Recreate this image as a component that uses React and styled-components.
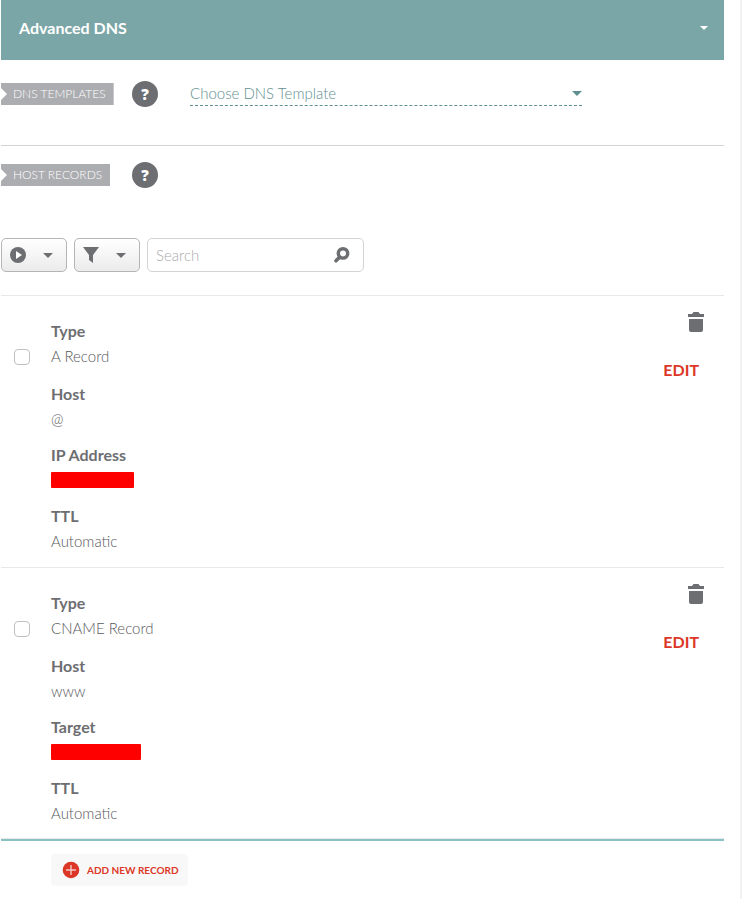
import React, { useId } from "react";
import styled, { createGlobalStyle } from "styled-components";

const colors = {
  teal: "#7ba6a7",
  tealText: "#5f8f90",
  accent: "#8bc1c1",
  gray: "#6d6e71",
  tag: "#acadb1",
  red: "#dc3726",
  line: "#e8e8e8",
};

const GlobalStyle = createGlobalStyle`
  *, *::before, *::after { box-sizing: border-box; }
  body {
    margin: 0;
    background: #fff;
    color: ${colors.gray};
    font-family: Lato, "Open Sans", sans-serif;
    font-size: 15px;
    font-weight: 300;
    line-height: 24px;
  }
  button, input, select { font: inherit; color: inherit; }
  svg { display: block; flex: none; }
`;

const Page = styled.main`
  min-height: 100vh;
  padding: 0 16px 12px 1px;
  border-right: 2px solid #f1f1f1;
`;

const PanelHeader = styled.button`
  display: flex;
  align-items: center;
  justify-content: space-between;
  width: 100%;
  height: 60px;
  padding: 0 16px 4px 18px;
  border: 0;
  background: ${colors.teal};
  color: #fff;
  font-size: 16px;
  font-weight: 700;
  cursor: pointer;
`;

const Section = styled.section`
  display: flex;
  align-items: center;
  padding-top: ${(p) => (p.$divided ? 21 : 16)}px;
  padding-bottom: ${(p) => (p.$divided ? 38 : 50)}px;
  border-bottom: ${(p) => (p.$divided ? "1px solid #d2d3d4" : "0")};
`;

const TagColumn = styled.div`
  flex: 0 0 131px;
`;

const Tag = styled.h2`
  width: fit-content;
  margin: 0;
  padding: 0 8px 0 12px;
  background: ${colors.tag};
  clip-path: polygon(0 0, 100% 0, 100% 100%, 0 100%, 0 17px, 6px 11px, 0 5px);
  color: #fff;
  font-size: 12px;
  font-weight: 300;
  line-height: 22px;
  white-space: nowrap;
`;

const HelpButton = styled.button`
  width: 26px;
  height: 26px;
  padding: 0;
  border: 0;
  border-radius: 50%;
  background: ${colors.gray};
  color: #fff;
  font-family: "Open Sans", sans-serif;
  font-size: 15px;
  font-weight: 800;
  line-height: 26px;
  cursor: pointer;
`;

const SelectField = styled.div`
  display: grid;
  flex: 0 1 392px;
  align-items: center;
  align-self: flex-start;
  margin-left: 32px;
  border-bottom: 1px dashed ${colors.tealText};
  color: ${colors.tealText};

  > * { grid-area: 1 / 1; }
  > svg { justify-self: end; pointer-events: none; }
`;

const Select = styled.select`
  width: 100%;
  height: 24px;
  padding: 0;
  border: 0;
  background: none;
  appearance: none;
`;

const Toolbar = styled.div`
  display: flex;
  gap: 7px;
  padding-bottom: 23px;
`;

const MenuButton = styled.button`
  display: flex;
  align-items: center;
  justify-content: space-between;
  width: 66px;
  height: 34px;
  padding: 0 13px 0 8px;
  border: 1px solid #b4b5b7;
  border-radius: 5px;
  background: linear-gradient(#fff, #ebebeb);
  cursor: pointer;
`;

const SearchBox = styled.label`
  display: flex;
  align-items: center;
  flex: 0 1 217px;
  min-width: 0;
  height: 34px;
  padding: 0 13px 0 8px;
  border: 1px solid #d2d3d4;
  border-radius: 5px;
`;

const SearchInput = styled.input`
  flex: 1;
  width: 100%;
  min-width: 0;
  padding: 0;
  border: 0;
  outline: 0;
  background: none;
  line-height: 22px;

  &::placeholder { color: #a9aaad; opacity: 1; }
`;

const RecordList = styled.ul`
  margin: 0;
  padding: 0;
  border-bottom: 2px solid ${colors.accent};
  list-style: none;
`;

const Record = styled.li`
  display: grid;
  grid-template-columns: 50px 1fr auto;
  border-top: 1px solid ${colors.line};

  &:last-child { box-shadow: inset 0 -1px ${colors.line}; }
`;

const Checkbox = styled.input`
  width: 16px;
  height: 16px;
  margin: 53px 0 0 13px;
  border: 1px solid #bfc0c2;
  border-radius: 4px;
  background: #fff;
  appearance: none;

  &:checked { background: ${colors.gray}; }
`;

const Fields = styled.dl`
  display: flex;
  flex-direction: column;
  gap: 13px;
  margin: 0;
  padding: 24px 0 14px;
`;

const Field = styled.div`
  &:first-child { padding-bottom: 2px; }
`;

const FieldName = styled.dt`
  padding-bottom: 2px;
  font-size: 16px;
  font-weight: 700;
  line-height: 22px;
`;

const FieldValue = styled.dd`
  display: flex;
  align-items: center;
  height: 24px;
  margin: 0;
  color: #58595c;
`;

const Redaction = styled.span`
  width: ${(p) => p.$width}px;
  height: 16px;
  border-radius: 1px;
  background: #f00;
`;

const Actions = styled.div`
  display: flex;
  flex-direction: column;
  align-items: flex-end;
  gap: 26px;
  padding: 16px 20px 0 0;
`;

const IconButton = styled.button`
  padding: 0;
  border: 0;
  background: none;
  cursor: pointer;
`;

const EditButton = styled(IconButton)`
  padding-right: 5px;
  color: ${colors.red};
  font-size: 16px;
  font-weight: 700;
`;

const AddButton = styled.button`
  display: flex;
  align-items: center;
  gap: 7px;
  height: 32px;
  margin: 13px 0 0 50px;
  padding: 0 9px 0 11px;
  border: 0;
  border-radius: 4px;
  background: #f8f8f8;
  color: ${colors.red};
  font-size: 10px;
  font-weight: 700;
  line-height: 16px;
  cursor: pointer;
`;

const Caret = ({ width = 10, height = 5 }) => (
  <svg width={width} height={height} viewBox="0 0 10 5" preserveAspectRatio="none" aria-hidden="true">
    <path d="M0 0h10L5 5z" fill="currentColor" />
  </svg>
);

const PlayIcon = () => (
  <svg width="16" height="16" viewBox="0 0 16 16" aria-hidden="true">
    <circle cx="8" cy="8" r="8" fill={colors.gray} />
    <path d="M6 4l6 4-6 4z" fill="#fff" />
  </svg>
);

const FilterIcon = () => (
  <svg width="16" height="16" viewBox="0 0 16 16" aria-hidden="true">
    <path d="M0 0h16l-6 8v8l-4-3V8z" fill={colors.gray} />
  </svg>
);

const SearchIcon = () => (
  <svg width="16" height="16" viewBox="0 0 16 16" fill="none" stroke={colors.gray} aria-hidden="true">
    <circle cx="9" cy="6.4" r="4.7" strokeWidth="3.4" />
    <path d="M5.3 10.5L2 13.8" strokeWidth="3.6" strokeLinecap="round" />
  </svg>
);

const TrashIcon = () => (
  <svg width="16" height="20" viewBox="0 0 16 20" fill={colors.gray} aria-hidden="true">
    <path d="M0 2h4l1.5-2h5L12 2h4v3H0z" />
    <path d="M1 7h14v11a2 2 0 0 1-2 2H3a2 2 0 0 1-2-2z" />
  </svg>
);

const PlusIcon = () => (
  <svg width="18" height="18" viewBox="0 0 18 18" aria-hidden="true">
    <circle cx="9" cy="9" r="8.3" fill={colors.red} />
    <path d="M9 4v10M4 9h10" stroke="#f3c9c5" strokeWidth="1.4" />
  </svg>
);

const records = [
  {
    id: "a",
    fields: [
      { name: "Type", value: "A Record" },
      { name: "Host", value: "@" },
      { name: "IP Address", redacted: 83 },
      { name: "TTL", value: "Automatic" },
    ],
  },
  {
    id: "cname",
    fields: [
      { name: "Type", value: "CNAME Record" },
      { name: "Host", value: "www" },
      { name: "Target", redacted: 90 },
      { name: "TTL", value: "Automatic" },
    ],
  },
];

function HostRecord({ fields }) {
  const type = fields[0].value;
  return (
    <Record>
      <Checkbox type="checkbox" aria-label={`Select ${type}`} />
      <Fields>
        {fields.map(({ name, value, redacted }) => (
          <Field key={name}>
            <FieldName>{name}</FieldName>
            <FieldValue>{redacted ? <Redaction $width={redacted} /> : value}</FieldValue>
          </Field>
        ))}
      </Fields>
      <Actions>
        <IconButton type="button" aria-label={`Delete ${type}`}>
          <TrashIcon />
        </IconButton>
        <EditButton type="button">EDIT</EditButton>
      </Actions>
    </Record>
  );
}

export default function App() {
  const templatesId = useId();
  return (
    <>
      <GlobalStyle />
      <Page>
        <PanelHeader type="button" aria-expanded="true">
          Advanced DNS
          <Caret width={8} height={4} />
        </PanelHeader>

        <Section $divided>
          <TagColumn>
            <Tag id={templatesId}>DNS TEMPLATES</Tag>
          </TagColumn>
          <HelpButton type="button" aria-label="About DNS templates">?</HelpButton>
          <SelectField>
            <Select aria-labelledby={templatesId}>
              <option>Choose DNS Template</option>
            </Select>
            <Caret />
          </SelectField>
        </Section>

        <Section>
          <TagColumn>
            <Tag>HOST RECORDS</Tag>
          </TagColumn>
          <HelpButton type="button" aria-label="About host records">?</HelpButton>
        </Section>

        <Toolbar>
          <MenuButton type="button" aria-label="Actions">
            <PlayIcon />
            <Caret />
          </MenuButton>
          <MenuButton type="button" aria-label="Filters">
            <FilterIcon />
            <Caret />
          </MenuButton>
          <SearchBox>
            <SearchInput type="text" placeholder="Search" aria-label="Search" />
            <SearchIcon />
          </SearchBox>
        </Toolbar>

        <RecordList>
          {records.map((record) => (
            <HostRecord key={record.id} fields={record.fields} />
          ))}
        </RecordList>

        <AddButton type="button">
          <PlusIcon />
          ADD NEW RECORD
        </AddButton>
      </Page>
    </>
  );
}
